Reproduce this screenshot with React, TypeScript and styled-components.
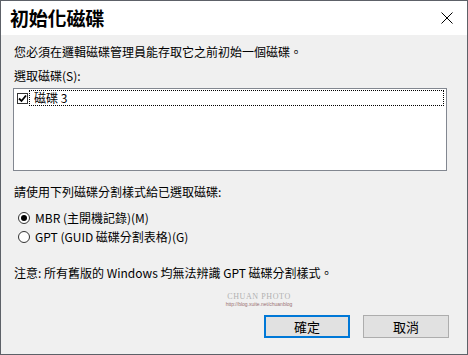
import * as React from 'react';
import styled, { createGlobalStyle } from 'styled-components';

const GlobalStyle = createGlobalStyle`
  html, body {
    margin: 0;
    padding: 0;
    background: #2e3a47;
  }
  body {
    font-family: "Noto Sans CJK TC", "Noto Sans", sans-serif;
    font-size: 12px;
    color: #000;
  }
`;

const Window = styled.div`
  box-sizing: border-box;
  width: 468px;
  height: 355px;
  border: 1px solid #5d6168;
  background: #f0f0f0;
  display: flex;
  flex-direction: column;
`;

const TitleBar = styled.div`
  height: 34px;
  background: #ffffff;
  display: flex;
  align-items: center;
  justify-content: space-between;
  padding: 0 14px 0 9px;
`;

const Title = styled.div`
  font-size: 19px;
  font-weight: 700;
  line-height: 24px;
  letter-spacing: -0.2px;
`;

const CloseButton = styled.div`
  width: 12px;
  height: 12px;
  display: flex;
`;

const Content = styled.div`
  display: flex;
  flex-direction: column;
  padding: 9px 18px 0 12px;
`;

const Line = styled.div<{ $top?: number }>`
  height: 16px;
  line-height: 16px;
  padding-left: 1px;
  margin-top: ${(p) => p.$top ?? 0}px;
  white-space: nowrap;
`;

const ListBox = styled.div`
  box-sizing: border-box;
  width: 434px;
  height: 83px;
  margin-top: 4px;
  border: 1px solid #828790;
  background: #ffffff;
  padding: 1px 2px 0 2px;
`;

const ListItem = styled.div`
  display: flex;
  align-items: center;
`;

const CheckBox = styled.div`
  box-sizing: border-box;
  width: 11px;
  height: 11px;
  border: 1px solid #333;
  background: #fff;
  margin: 0 1px 0 1px;
  display: flex;
  align-items: center;
  justify-content: center;
`;

const ItemLabel = styled.div`
  flex: 1;
  height: 16px;
  line-height: 14px;
  box-sizing: border-box;
  border: 1px dotted #000;
  padding-left: 4px;
`;

const RadioRow = styled.div<{ $top?: number }>`
  display: flex;
  align-items: center;
  height: 19px;
  padding-left: 5px;
  margin-top: ${(p) => p.$top ?? 0}px;
`;

const Radio = styled.div<{ $checked?: boolean }>`
  box-sizing: border-box;
  width: 12px;
  height: 12px;
  border-radius: 50%;
  border: 1px solid #333;
  background: #fff;
  margin-right: 5px;
  display: flex;
  align-items: center;
  justify-content: center;
  &::after {
    content: '';
    width: 6px;
    height: 6px;
    border-radius: 50%;
    background: ${(p) => (p.$checked ? '#000' : 'transparent')};
  }
`;

const Watermark = styled.div`
  display: flex;
  flex-direction: column;
  align-items: center;
  margin-top: 12px;
  padding-left: 56px;
  font-family: "Liberation Serif", serif;
`;

const WatermarkName = styled.div`
  font-size: 8px;
  line-height: 8px;
  color: #b0b0b0;
  letter-spacing: 0.6px;
`;

const WatermarkUrl = styled.div`
  font-family: "Liberation Sans", sans-serif;
  font-size: 5px;
  line-height: 7px;
  color: #9a7070;
`;

const ButtonRow = styled.div`
  display: flex;
  justify-content: flex-end;
  gap: 13px;
  margin-top: 7px;
`;

const Button = styled.div<{ $primary?: boolean }>`
  box-sizing: border-box;
  width: 86px;
  height: 23px;
  background: #e1e1e1;
  border: ${(p) => (p.$primary ? '2px solid #0078d7' : '1px solid #adadad')};
  display: flex;
  align-items: center;
  justify-content: center;
  font-size: 13px;
`;

export default function App() {
  return (
    <>
      <GlobalStyle />
      <Window>
        <TitleBar>
          <Title>初始化磁碟</Title>
          <CloseButton>
            <svg width="12" height="12" viewBox="0 0 12 12">
              <path d="M0.5 0.5 L11.5 11.5 M11.5 0.5 L0.5 11.5" stroke="#000" strokeWidth="1" />
            </svg>
          </CloseButton>
        </TitleBar>
        <Content>
          <Line>您必須在邏輯磁碟管理員能存取它之前初始一個磁碟。</Line>
          <Line $top={8}>選取磁碟(S):</Line>
          <ListBox>
            <ListItem>
              <CheckBox>
                <svg width="9" height="9" viewBox="0 0 9 9">
                  <path d="M1 4.5 L3.5 7 L8 1.5" stroke="#000" strokeWidth="1.8" fill="none" />
                </svg>
              </CheckBox>
              <ItemLabel>磁碟 3</ItemLabel>
            </ListItem>
          </ListBox>
          <Line $top={13}>請使用下列磁碟分割樣式給已選取磁碟:</Line>
          <RadioRow $top={8}>
            <Radio $checked />
            MBR (主開機記錄)(M)
          </RadioRow>
          <RadioRow>
            <Radio />
            GPT (GUID 磁碟分割表格)(G)
          </RadioRow>
          <Line $top={19}>注意: 所有舊版的 Windows 均無法辨識 GPT 磁碟分割樣式。</Line>
          <Watermark>
            <WatermarkName>CHUAN PHOTO</WatermarkName>
            <WatermarkUrl>http://blog.xuite.net/chuanblog</WatermarkUrl>
          </Watermark>
          <ButtonRow>
            <Button $primary>確定</Button>
            <Button>取消</Button>
          </ButtonRow>
        </Content>
      </Window>
    </>
  );
}
